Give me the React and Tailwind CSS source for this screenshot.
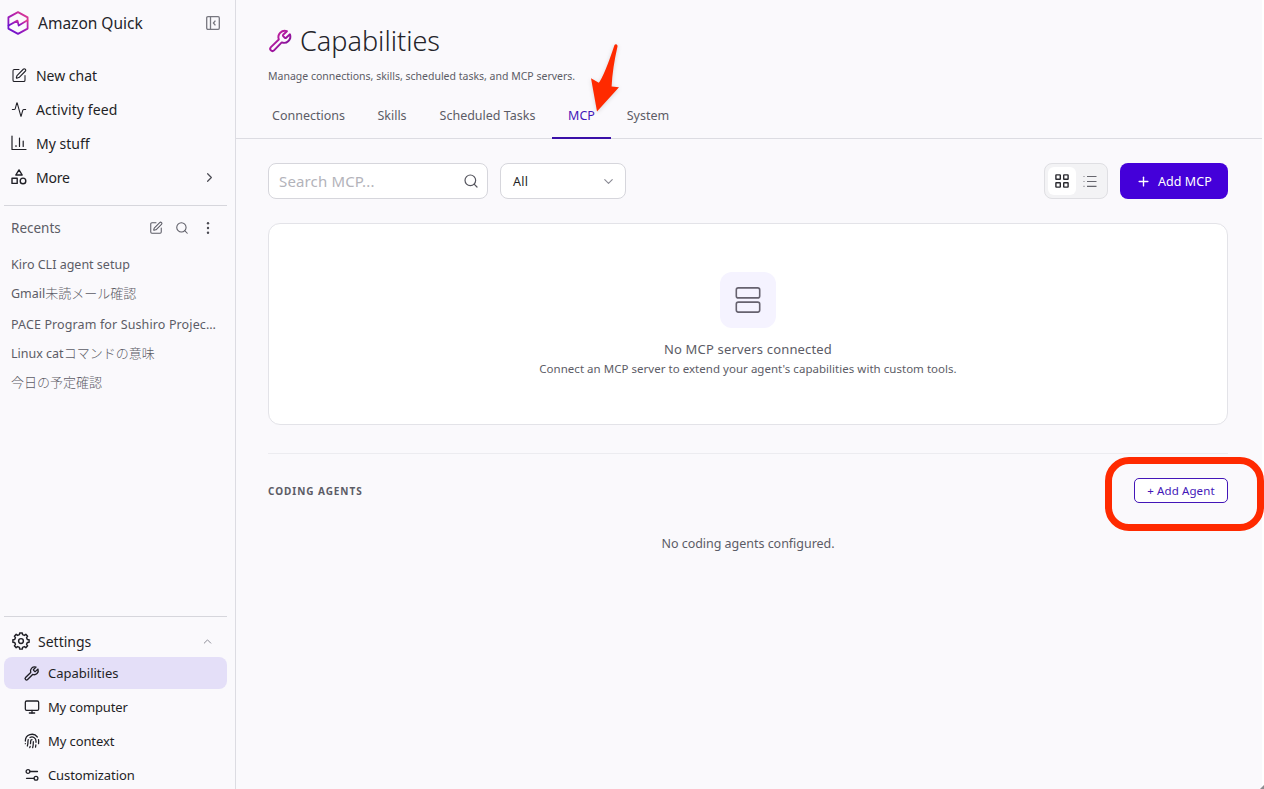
import React from 'react';
import { Activity, ChevronDown, ChevronRight, ChevronUp, Fingerprint, Monitor, Plus, Search, SquarePen } from 'lucide-react';

const WrenchIcon = ({ className, stroke = 'currentColor', strokeWidth = 1.9 }) => (
  <svg viewBox="0 0 24 24" className={className} fill="none" stroke={stroke} strokeWidth={strokeWidth} strokeLinecap="round" strokeLinejoin="round">
    <defs>
      <linearGradient id="wrench-gradient" x1="0" y1="0" x2="1" y2="1">
        <stop offset="0" stopColor="#d42a9c" />
        <stop offset="0.5" stopColor="#a6169f" />
        <stop offset="1" stopColor="#5f1196" />
      </linearGradient>
    </defs>
    <path d="M14.9 6.3a1 1 0 0 0 0 1.2l1.5 1.5a1 1 0 0 0 1.3 0l3.5-3.2a5.9 5.9 0 0 1-7.6 7.5l-7.1 7.3a2.05 2.05 0 0 1-2.9-2.9l7.3-7.1a5.9 5.9 0 0 1 7.5-7.6z" />
  </svg>
);

// eight-toothed cog outline
const gearPoints = Array.from({ length: 8 })
  .flatMap((_, i) => [
    [-14, 6.5],
    [-9, 8.2],
    [9, 8.2],
    [14, 6.5],
  ].map(([offset, r]) => {
    const a = ((i * 45 + offset) * Math.PI) / 180;
    return `${(9 + r * Math.sin(a)).toFixed(2)},${(9 - r * Math.cos(a)).toFixed(2)}`;
  }))
  .join(' ');

const GearIcon = () => (
  <svg viewBox="0 0 18 18" className="w-[18px] h-[18px]" fill="none" stroke="currentColor" strokeWidth="1.45" strokeLinejoin="round">
    <polygon points={gearPoints} />
    <circle cx="9" cy="9" r="2.4" />
  </svg>
);

const QuickLogo = () => (
  <svg viewBox="0 0 22 24" className="w-[22px] h-6" fill="none" stroke="url(#quick-gradient)" strokeWidth="1.8" strokeLinejoin="round" strokeLinecap="round">
    <defs>
      <linearGradient id="quick-gradient" x1="1" y1="0" x2="0.2" y2="1">
        <stop offset="0" stopColor="#e8408a" />
        <stop offset="0.45" stopColor="#b01fb0" />
        <stop offset="1" stopColor="#6a12d0" />
      </linearGradient>
    </defs>
    <path d="M11 1.1 20.6 6.4V17.6L11 22.9 1.4 17.6V6.4Z" />
    <path d="M1.6 14.5 10.4 9.6l1.3 5L20.4 9.3" />
  </svg>
);

const CollapseIcon = () => (
  <svg viewBox="0 0 14 14" className="w-3.5 h-3.5" fill="none" stroke="#77777f" strokeWidth="1.3">
    <rect x="0.7" y="0.7" width="12.6" height="12.6" rx="1.2" />
    <path d="M4.5 1v12" />
    <path d="M9.4 4.6 7.4 7l2 2.4" />
  </svg>
);

const ChartIcon = () => (
  <svg viewBox="0 0 16 16" className="w-4 h-4" fill="none" stroke="currentColor" strokeWidth="1.2" strokeLinecap="round" strokeLinejoin="round">
    <path d="M1 1v13.5h14M5 10.5v1M8.5 3v8.5M12.2 6v5.5" />
  </svg>
);

const ShapesIcon = () => (
  <svg viewBox="0 0 16 16" className="w-4 h-4" fill="none" stroke="currentColor" strokeWidth="1.4" strokeLinejoin="round">
    <path d="M8 0.9 11.2 6H4.8Z" />
    <rect x="1" y="9.2" width="5.2" height="5.2" />
    <circle cx="12" cy="11.9" r="2.8" />
  </svg>
);

const SlidersIcon = () => (
  <svg viewBox="0 0 16 16" className="w-4 h-4" fill="none" stroke="currentColor" strokeWidth="1.3" strokeLinecap="round">
    <circle cx="4" cy="4.5" r="1.9" />
    <path d="M6 4.5h7.5M2.5 11.3H10" />
    <circle cx="12" cy="11.3" r="1.9" />
  </svg>
);

const GridIcon = () => (
  <svg viewBox="0 0 14 14" className="w-3.5 h-3.5" fill="none" stroke="#2a2a30" strokeWidth="1.4">
    <rect x="0.9" y="0.9" width="4.4" height="4.4" rx="0.4" />
    <rect x="8.7" y="0.9" width="4.4" height="4.4" rx="0.4" />
    <rect x="0.9" y="8.7" width="4.4" height="4.4" rx="0.4" />
    <rect x="8.7" y="8.7" width="4.4" height="4.4" rx="0.4" />
  </svg>
);

const ListIcon = () => (
  <svg viewBox="0 0 14 12" className="w-3.5 h-3" fill="none" stroke="#66666e" strokeWidth="1.2">
    <path d="M4 1.5h9.5M4 6.5h9.5M4 11.4h9.5" />
    <path d="M0.4 1.5h1.2M0.4 6.5h1.2M0.4 11.4h1.2" strokeOpacity="0.7" />
  </svg>
);

const ServerIcon = () => (
  <svg viewBox="0 0 26 26" className="w-[26px] h-[26px]" fill="none" stroke="#66626f" strokeWidth="1.6">
    <rect x="1.3" y="0.9" width="23.4" height="10" rx="2" />
    <rect x="1.3" y="15.1" width="23.4" height="10" rx="2" />
  </svg>
);

const navItems = [
  { label: 'New chat', icon: <SquarePen size={17} strokeWidth={1.6} />, spacing: 'tracking-[-0.02px]' },
  { label: 'Activity feed', icon: <Activity size={17} strokeWidth={1.6} />, spacing: 'tracking-[0.1px]' },
  { label: 'My stuff', icon: <ChartIcon />, spacing: 'tracking-[0px]' },
  { label: 'More', icon: <ShapesIcon />, spacing: 'tracking-[-0.2px]', more: true },
];

const recents = [
  { latin: 'Kiro CLI agent setup', style: 'pt-px' },
  { latin: 'Gmail', cjk: '未読メール確認', style: '' },
  { latin: 'PACE Program for Sushiro Projec…', style: 'tracking-[0.12px] pt-0.5' },
  { latin: 'Linux cat', cjk: 'コマンドの意味', style: 'pt-px' },
  { cjk: '今日の予定確認', style: '' },
];

const settingsItems = [
  { label: 'Capabilities', icon: <WrenchIcon className="w-[17px] h-[17px] -ml-px" />, style: 'tracking-[0px]', active: true },
  { label: 'My computer', icon: <Monitor size={16} strokeWidth={1.9} />, style: 'tracking-[-0.17px]' },
  { label: 'My context', icon: <Fingerprint size={16} strokeWidth={1.9} />, style: 'tracking-[-0.1px]' },
  { label: 'Customization', icon: <SlidersIcon />, style: 'tracking-[-0.1px]' },
];

const tabs = [
  { label: 'Connections', width: 'w-[105px]' },
  { label: 'Skills', width: 'w-[62px]' },
  { label: 'Scheduled Tasks', width: 'w-[129px]' },
  { label: 'MCP', width: 'w-[59px]', active: true },
  { label: 'System', width: 'w-[74px]' },
];

const Sidebar = () => (
  <aside className="w-[236px] shrink-0 h-full flex flex-col border-r border-[#dcdce2]">
    <div className="h-[46px] flex items-center pl-[7px] pr-4">
      <QuickLogo />
      <span className="ml-[9px] pt-0.5 text-[15.5px] text-[#24242a]">Amazon Quick</span>
      <span className="ml-auto mr-[-1px]"><CollapseIcon /></span>
    </div>

    <nav className="mt-[13px] text-[#1f1f26]">
      {navItems.map((item) => (
        <div key={item.label} className="h-[34px] flex items-center pl-[11px] pr-[18px]">
          <span className="w-4 pb-0.5 flex justify-center">{item.icon}</span>
          <span className={`ml-[9px] pb-px text-[14px] ${item.spacing}`}>{item.label}</span>
          {item.more && <ChevronRight size={15} strokeWidth={1.9} className="ml-auto mb-0.5 text-[#4a4a52]" />}
        </div>
      ))}
    </nav>

    <div className="mt-[10px] ml-1 mr-2 border-t border-[#d6d6dc]" />

    <div className="h-11 flex items-center pl-[11px] pr-5 text-[#5c5c66]">
      <span className="text-[13.5px]">Recents</span>
      <SquarePen size={14} strokeWidth={1.8} className="ml-auto" />
      <Search size={14} strokeWidth={1.8} className="ml-3" />
      <svg viewBox="0 0 14 14" className="w-3.5 h-3.5 ml-3" fill="#4a4a52">
        <circle cx="7" cy="2.3" r="1.2" />
        <circle cx="7" cy="7" r="1.2" />
        <circle cx="7" cy="11.7" r="1.2" />
      </svg>
    </div>

    <ul className="pl-[11px] text-[12.5px] text-[#5c5c66]">
      {recents.map((item, index) => (
        <li key={index} className={`h-[29.6px] flex items-center whitespace-nowrap ${item.style}`}>
          {item.latin}
          {item.cjk && <span className="pb-[3px] text-[13px] leading-5 font-light">{item.cjk}</span>}
        </li>
      ))}
    </ul>

    <div className="mt-auto h-[173px] ml-1 mr-2 border-t border-[#d6d6dc] shrink-0 overflow-hidden text-[#1f1f26]">
      <div className="h-10 pt-2 flex items-center pl-2 pr-[13px]">
        <GearIcon />
        <span className="ml-2 text-[14px]">Settings</span>
        <ChevronUp size={13} strokeWidth={1.8} className="ml-auto text-[#8a8a94]" />
      </div>
      {settingsItems.map((item) => (
        <div
          key={item.label}
          className={`h-8 mb-0.5 flex items-center pl-5 rounded-lg ${item.active ? 'bg-[#e4dff8]' : ''}`}
        >
          {item.icon}
          <span className={`ml-2 pt-px text-[13px] ${item.style}`}>{item.label}</span>
        </div>
      ))}
    </div>
  </aside>
);

const App = () => {
  return (
    <div className="relative w-[1264px] h-[789px] flex overflow-hidden bg-[#faf9fc] font-['Noto_Sans','Noto_Sans_CJK_JP',sans-serif]">
      <Sidebar />

      <main className="flex-1 min-w-0 flex flex-col">
        {/* Page header */}
        <header className="h-[139px] shrink-0 border-b border-[#dcdce2] flex flex-col">
          <div className="mt-[22px] h-[38px] pl-[31px] flex items-center">
            <WrenchIcon className="w-[26px] h-[26px]" stroke="url(#wrench-gradient)" strokeWidth={1.8} />
            <h1 className="ml-[7px] text-[27px] font-light text-[#24242a] whitespace-nowrap">Capabilities</h1>
          </div>
          <p className="mt-[7px] pl-8 text-[10.5px] leading-[18px] text-[#5c5c66]">
            Manage connections, skills, scheduled tasks, and MCP servers.
          </p>
          <div className="mt-auto -mb-px h-[46px] pl-5 flex text-[12.5px] text-[#5c5c66]">
            {tabs.map((tab) => (
              <div
                key={tab.label}
                className={`${tab.width} pt-0.5 flex justify-center items-center border-b-2 whitespace-nowrap ${tab.active ? 'border-[#3a10a8] text-[#4316b8]' : 'border-transparent'}`}
              >
                {tab.label}
              </div>
            ))}
          </div>
        </header>

        <div className="pl-8 pr-[34px] pt-6">
          {/* Toolbar */}
          <div className="h-9 flex">
            <div className="w-[220px] bg-white border border-[#d6d6dc] rounded-lg flex items-center justify-between pl-[10px] pr-2">
              <span className="text-[15px] tracking-[0.15px] text-[#b3b3ba]">Search MCP...</span>
              <Search size={16} strokeWidth={1.8} className="text-[#55555e]" />
            </div>
            <div className="ml-3 w-[126px] bg-white border border-[#d6d6dc] rounded-lg flex items-center justify-between pl-3 pr-[9px]">
              <span className="pt-0.5 text-[12.5px] tracking-[0.3px] text-[#1f1f26]">All</span>
              <ChevronDown size={15} strokeWidth={1.8} className="text-[#8a8a94]" />
            </div>
            <div className="ml-auto w-16 bg-[#f3f3f5] border border-[#dfdfe3] rounded-lg flex items-center p-[3px]">
              <span className="w-7 h-7 rounded-md bg-white flex items-center justify-center"><GridIcon /></span>
              <span className="w-7 h-7 flex items-center justify-center"><ListIcon /></span>
            </div>
            <button className="ml-3 w-[108px] rounded-lg bg-[#4400d9] text-white text-[12.5px] flex items-center pl-4">
              <Plus size={15} strokeWidth={2.2} />
              <span className="ml-[7px] pt-0.5 whitespace-nowrap tracking-[0.05px]">Add MCP</span>
            </button>
          </div>

          {/* Empty state */}
          <div className="mt-6 h-[202px] bg-white border border-[#e3e3e8] rounded-xl flex flex-col items-center pt-12">
            <div className="w-14 h-14 rounded-xl bg-[#f5f3ff] flex items-center justify-center">
              <ServerIcon />
            </div>
            <div className="mt-[11px] text-[13px] leading-5 tracking-[0.17px] text-[#5c5c66]">No MCP servers connected</div>
            <div className="text-[11.5px] leading-5 tracking-[0.03px] text-[#5c5c66]">Connect an MCP server to extend your agent's capabilities with custom tools.</div>
          </div>

          {/* Coding agents */}
          <div className="mt-7 border-t border-[#ececf0] pt-6 flex items-center justify-between">
            <h2 className="pt-0.5 text-[10px] font-bold text-[#5c5c66] tracking-[0.95px]">CODING AGENTS</h2>
            <button className="w-[94px] h-[25px] pt-px border border-[#4316b8] rounded-[5px] bg-white text-[11.5px] tracking-[0.1px] text-[#4316b8] whitespace-nowrap">+ Add Agent</button>
          </div>
          <p className="mt-[31px] text-center text-[12.5px] leading-5 tracking-[-0.03px] text-[#5c5c66]">No coding agents configured.</p>
        </div>
      </main>

      <div className="w-0.5 shrink-0 bg-white" />

      {/* Annotations */}
      <svg viewBox="0 0 34 74" className="absolute left-[588px] top-[41px] w-[34px] h-[74px] drop-shadow-sm" fill="#ff2a00">
        <path d="M26.5 3.9Q27.5 2.8 28.8 3.5Q29.7 4.2 29.5 5.5Q24.5 27 23.6 45.5L31 46.2L9 70.5L3 37.3L10.8 41.7Q16.5 34 26.5 3.9Z" />
      </svg>
      <div className="absolute left-[1105px] top-[457px] w-[159px] h-[74px] border-[7px] border-[#ff2a00] rounded-[24px]" />
      {/* window resize corner */}
      <svg viewBox="0 0 4 4" className="absolute right-0 bottom-0 w-1 h-1" fill="#8c8c90">
        <path d="M4 0V4H0Z" />
      </svg>
    </div>
  );
};

export default App;
